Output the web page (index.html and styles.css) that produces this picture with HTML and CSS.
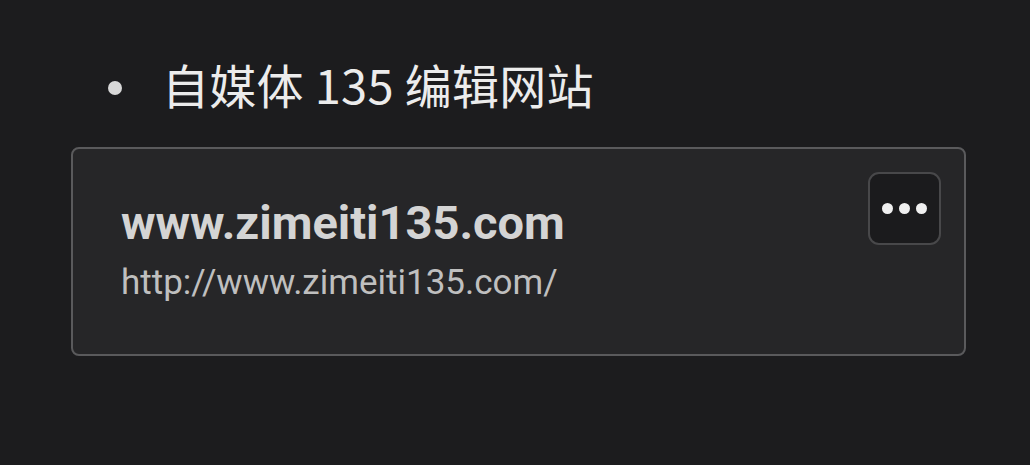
FILE: index.html
```html
<!DOCTYPE html>
<html lang="zh">
<head>
<meta charset="utf-8">
<link rel="stylesheet" href="styles.css">
</head>
<body>
<div class="page">
  <ul class="list">
    <li class="item">自媒体 135 编辑网站</li>
  </ul>
  <div class="card">
    <div class="card-text">
      <div class="card-title">www.zimeiti135.com</div>
      <div class="card-url">http://www.zimeiti135.com/</div>
    </div>
    <button class="more" type="button" aria-label="更多">
      <span class="dot"></span><span class="dot"></span><span class="dot"></span>
    </button>
  </div>
</div>
</body>
</html>
```

FILE: styles.css
```css
html, body {
  margin: 0;
  padding: 0;
  background: #1c1c1e;
}
body {
  width: 1030px;
  height: 465px;
  overflow: hidden;
  font-family: Roboto, "Noto Sans CJK SC", sans-serif;
  color: #e6e6e6;
}
.page {
  padding: 54px 64px 0 71px;
}
.list {
  list-style: none;
  margin: 0;
  padding: 0 0 0 91px;
}
.item {
  position: relative;
  font-size: 47px;
  line-height: 60px;
  color: #ececec;
  font-family: "Noto Sans CJK SC", Roboto, sans-serif;
  letter-spacing: 0.3px;
}
.item::before {
  content: "";
  position: absolute;
  left: -54px;
  top: 27px;
  width: 14px;
  height: 14px;
  border-radius: 50%;
  background: #d8d8d8;
}
.card {
  margin-top: 33px;
  width: 891px;
  height: 205px;
  box-sizing: content-box;
  border: 2px solid #5a5a5c;
  border-radius: 8px;
  background: #262628;
  display: flex;
  justify-content: space-between;
  align-items: flex-start;
}
.card-text {
  padding: 48px 0 0 48px;
}
.card-title {
  font-family: Roboto, sans-serif;
  font-weight: 700;
  font-size: 47px;
  line-height: 52px;
  color: #d4d4d4;
}
.card-url {
  font-family: Roboto, sans-serif;
  font-size: 35px;
  line-height: 42px;
  margin-top: 13px;
  color: #bfbfbf;
}
.more {
  margin: 23px 23px 0 0;
  width: 73px;
  height: 73px;
  box-sizing: border-box;
  border: 2px solid #48484a;
  border-radius: 11px;
  background: #1b1b1d;
  display: flex;
  align-items: center;
  justify-content: center;
  gap: 6px;
  padding: 0;
}
.dot {
  width: 11px;
  height: 11px;
  border-radius: 50%;
  background: #f0f0f0;
}
```
